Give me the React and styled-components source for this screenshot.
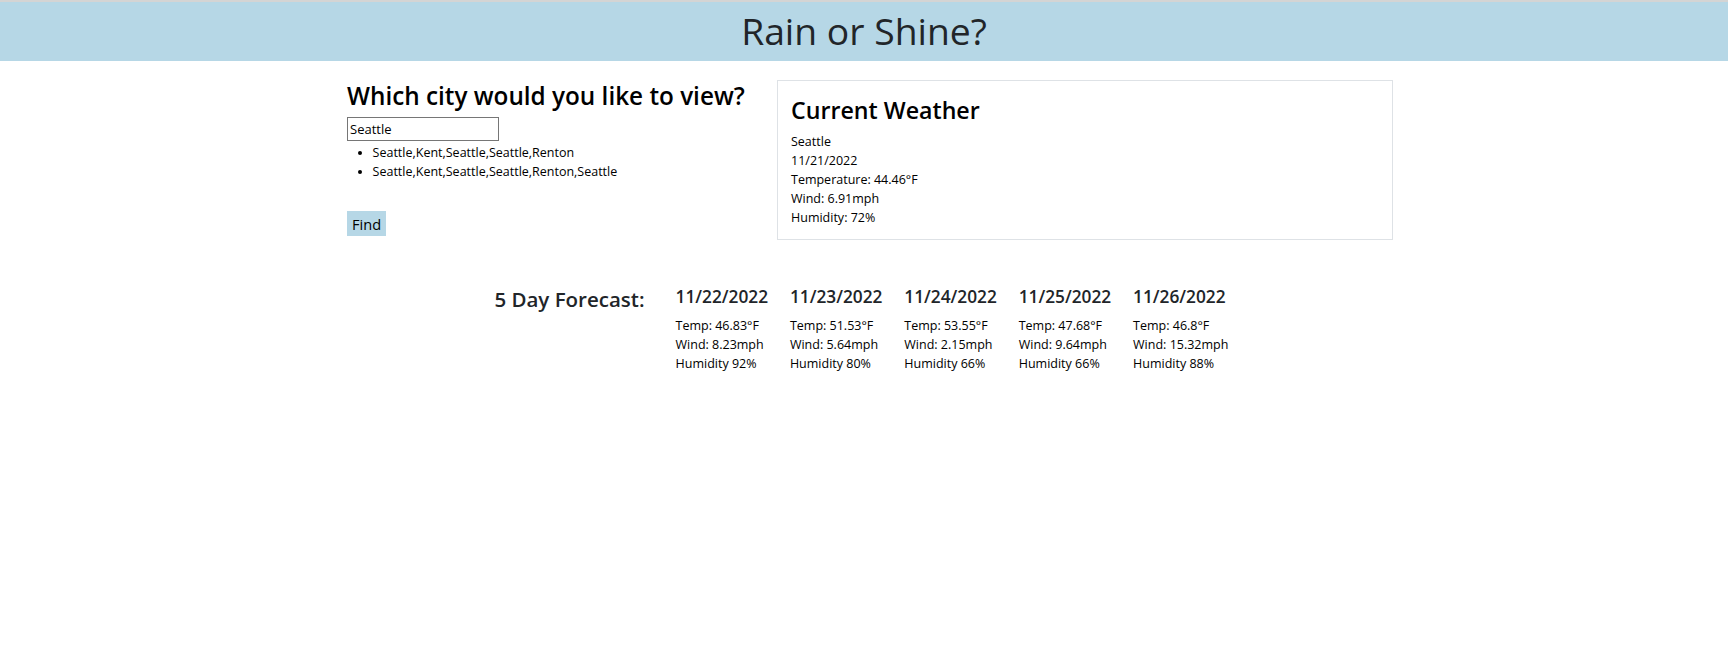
import React from 'react'
import styled, { createGlobalStyle } from 'styled-components'

const GlobalStyle = createGlobalStyle`
  body {
    margin: 0;
    font-family: "Open Sans", "Noto Sans", sans-serif;
    font-size: 12.5px;
    line-height: 19px;
    color: #212529;
    background: #fff;
  }
  * { box-sizing: border-box; }
`

const Header = styled.header`
  border-top: 2px solid #d4d4d4;
  background-color: #b6d7e6;
  height: 61px;
  display: flex;
  justify-content: center;
  align-items: center;
`

const Title = styled.h1`
  margin: 0;
  font-size: 37.3px;
  font-weight: 400;
  line-height: 1.2;
  color: #212529;
`

const Main = styled.main`
  width: 1058px;
  margin: 19px auto 0;
  padding-left: 12px;
  display: flex;
  align-items: flex-start;
`

const SearchCol = styled.section`
  flex: 0 0 430px;
  padding-top: 1px;
`

const Question = styled.h2`
  margin: 0 0 7px;
  font-size: 24.3px;
  font-weight: 600;
  line-height: 1.2;
  color: #000;
`

const CityInput = styled.input`
  display: block;
  width: 152px;
  height: 24px;
  border: 1px solid #767676;
  padding: 0 2px;
  font-family: inherit;
  font-size: 13px;
  color: #000;
  outline: none;
`

const History = styled.ul`
  margin: 2px 0 0;
  padding-left: 25.6px;
  color: #000;
`

const FindButton = styled.button`
  margin-top: 30px;
  height: 25px;
  padding: 0 5px;
  border: none;
  background-color: #b6d7e6;
  font-family: inherit;
  font-size: 14.6px;
  color: #000;
  cursor: pointer;
`

const Card = styled.section`
  flex: 0 0 616px;
  border: 1px solid #dee2e6;
  padding: 16px 13px 12px;
`

const CardTitle = styled.h2`
  margin: 0 0 7px;
  font-size: 23.2px;
  font-weight: 600;
  line-height: 1.2;
  color: #000;
`

const Line = styled.div`
  color: #000;
`

const Forecast = styled.section`
  margin-top: 47px;
  display: flex;
  justify-content: center;
  align-items: flex-start;
`

const ForecastLabel = styled.h3`
  flex: 0 0 195px;
  margin: 0;
  padding-right: 31px;
  text-align: right;
  font-size: 20.5px;
  font-weight: 600;
  line-height: 1.2;
`

const Day = styled.div`
  flex: 0 0 114.4px;
`

const DayDate = styled.h4`
  margin: 0 0 8px;
  font-size: 17.3px;
  font-weight: 600;
  line-height: 1.2;
`

const days = [
  { date: '11/22/2022', temp: '46.83', wind: '8.23', hum: 92 },
  { date: '11/23/2022', temp: '51.53', wind: '5.64', hum: 80 },
  { date: '11/24/2022', temp: '53.55', wind: '2.15', hum: 66 },
  { date: '11/25/2022', temp: '47.68', wind: '9.64', hum: 66 },
  { date: '11/26/2022', temp: '46.8', wind: '15.32', hum: 88 },
]

export default function App() {
  return (
    <>
      <GlobalStyle />
      <Header>
        <Title>Rain or Shine?</Title>
      </Header>
      <Main>
        <SearchCol>
          <Question>Which city would you like to view?</Question>
          <CityInput defaultValue="Seattle" />
          <History>
            <li>Seattle,Kent,Seattle,Seattle,Renton</li>
            <li>Seattle,Kent,Seattle,Seattle,Renton,Seattle</li>
          </History>
          <FindButton>Find</FindButton>
        </SearchCol>
        <Card>
          <CardTitle>Current Weather</CardTitle>
          <Line>Seattle</Line>
          <Line>11/21/2022</Line>
          <Line>Temperature: 44.46°F</Line>
          <Line>Wind: 6.91mph</Line>
          <Line>Humidity: 72%</Line>
        </Card>
      </Main>
      <Forecast>
        <ForecastLabel>5 Day Forecast:</ForecastLabel>
        {days.map((d) => (
          <Day key={d.date}>
            <DayDate>{d.date}</DayDate>
            <Line>Temp: {d.temp}°F</Line>
            <Line>Wind: {d.wind}mph</Line>
            <Line>Humidity {d.hum}%</Line>
          </Day>
        ))}
      </Forecast>
    </>
  )
}
